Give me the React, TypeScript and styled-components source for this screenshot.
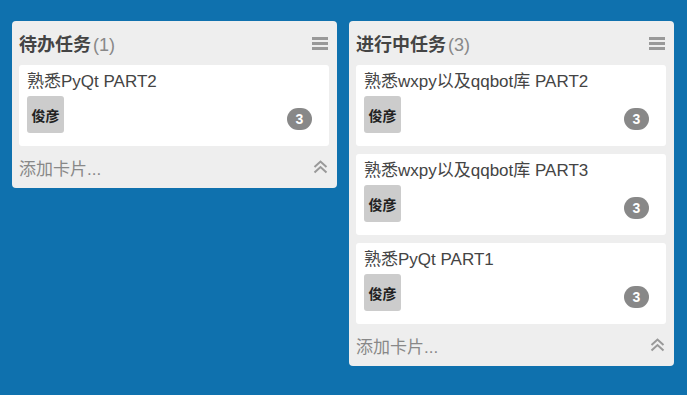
import React from 'react';
import styled, { createGlobalStyle } from 'styled-components';

interface Task {
    id: number;
    title: string;
    owner: string;
    count: number;
}

interface Lane {
    id: number;
    name: string;
    tasks: Task[];
}

const lanes: Lane[] = [
    {
        id: 1,
        name: '待办任务',
        tasks: [{ id: 1, title: '熟悉PyQt PART2', owner: '俊彦', count: 3 }],
    },
    {
        id: 2,
        name: '进行中任务',
        tasks: [
            { id: 2, title: '熟悉wxpy以及qqbot库 PART2', owner: '俊彦', count: 3 },
            { id: 3, title: '熟悉wxpy以及qqbot库 PART3', owner: '俊彦', count: 3 },
            { id: 4, title: '熟悉PyQt PART1', owner: '俊彦', count: 3 },
        ],
    },
];

const GlobalStyle = createGlobalStyle`
    html, body {
        margin: 0;
        padding: 0;
        height: 100%;
        background: #0f71ae;
    }
    body {
        font-family: 'Liberation Sans', Arial, 'Noto Sans CJK SC', sans-serif;
    }
`;

const MenuIcon = () => (
    <svg width="16" height="13" viewBox="0 0 16 13">
        <rect x="0" y="0" width="16" height="3" fill="#999" />
        <rect x="0" y="5" width="16" height="3" fill="#999" />
        <rect x="0" y="10" width="16" height="3" fill="#999" />
    </svg>
);

const CollapseIcon = () => (
    <svg width="15" height="14" viewBox="0 0 15 14">
        <path d="M1.5 7 L7.5 1.5 L13.5 7" fill="none" stroke="#999" strokeWidth="2" />
        <path d="M1.5 12.5 L7.5 7 L13.5 12.5" fill="none" stroke="#999" strokeWidth="2" />
    </svg>
);

const App = () => {
    return (
        <>
            <GlobalStyle />
            <Board>
                {lanes.map((lane) => (
                    <Column key={lane.id}>
                        <Header>
                            <Title>
                                {lane.name}
                                <Count>({lane.tasks.length})</Count>
                            </Title>
                            <IconButton>
                                <MenuIcon />
                            </IconButton>
                        </Header>
                        <CardList>
                            {lane.tasks.map((task) => (
                                <Card key={task.id}>
                                    <CardTitle>{task.title}</CardTitle>
                                    <CardMeta>
                                        <Owner>{task.owner}</Owner>
                                        <Badge>{task.count}</Badge>
                                    </CardMeta>
                                </Card>
                            ))}
                        </CardList>
                        <Footer>
                            <AddCard>添加卡片...</AddCard>
                            <IconButton>
                                <CollapseIcon />
                            </IconButton>
                        </Footer>
                    </Column>
                ))}
            </Board>
        </>
    );
};

export default App;

const Board = styled.div`
    display: flex;
    align-items: flex-start;
    gap: 12px;
    padding: 21px 12px;
`;

const Column = styled.div`
    width: 325px;
    background: #eeeeee;
    border-radius: 4px;
    padding: 0 8px 0 7px;
    box-sizing: border-box;
    display: flex;
    flex-direction: column;
`;

const Header = styled.div`
    height: 44px;
    display: flex;
    align-items: center;
    justify-content: space-between;
`;

const Title = styled.div`
    font-size: 18px;
    font-weight: 700;
    color: #444;
    font-family: 'Liberation Sans', 'Noto Sans CJK SC', sans-serif;
`;

const Count = styled.span`
    font-weight: 400;
    color: #888;
    margin-left: 2px;
`;

const IconButton = styled.div`
    display: flex;
    align-items: center;
    margin-right: 1px;
`;

const CardList = styled.div`
    display: flex;
    flex-direction: column;
    gap: 8px;
`;

const Card = styled.div`
    background: #fff;
    border-radius: 3px;
    height: 81px;
    box-sizing: border-box;
    padding: 7px 17px 0 8px;
`;

const CardTitle = styled.div`
    font-size: 17px;
    line-height: 20px;
    color: #444;
    font-family: 'Liberation Sans', 'Noto Sans CJK SC', sans-serif;
`;

const CardMeta = styled.div`
    display: flex;
    justify-content: space-between;
    align-items: flex-end;
    margin-top: 4px;
`;

const Owner = styled.div`
    width: 37px;
    height: 37px;
    background: #cccccc;
    border-radius: 3px;
    display: flex;
    align-items: center;
    justify-content: center;
    font-size: 14px;
    font-weight: 700;
    color: #222;
    font-family: 'Noto Sans CJK SC', sans-serif;
`;

const Badge = styled.div`
    width: 25px;
    height: 22px;
    border-radius: 11px;
    background: #888;
    color: #fff;
    font-size: 14px;
    font-weight: 700;
    display: flex;
    align-items: center;
    justify-content: center;
    margin-bottom: 3px;
`;

const Footer = styled.div`
    height: 42px;
    display: flex;
    align-items: center;
    justify-content: space-between;
`;

const AddCard = styled.div`
    font-size: 17px;
    color: #888;
    font-family: 'Liberation Sans', 'Noto Sans CJK SC', sans-serif;
`;
